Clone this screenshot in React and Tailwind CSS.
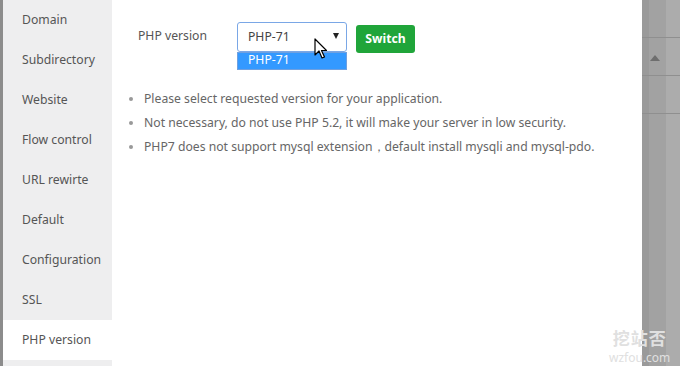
import React from "react";

const items = ["Domain","Subdirectory","Website","Flow control","URL rewirte","Default","Configuration","SSL","PHP version"];

export default function App() {
  return (
    <div className="relative flex h-[366px] w-[680px] overflow-hidden bg-white" style={{fontFamily: '"Noto Sans", "Open Sans", sans-serif'}}>
      <div className="w-[3px] shrink-0 bg-[#8c8c8c]" />
      <div className="flex w-[109px] shrink-0 flex-col bg-[#eeeeef]">
        {items.map((t, i) => (
          <div key={t} className={`flex h-10 shrink-0 items-center pl-[19px] text-[12.2px] text-[#555] ${i === 8 ? "bg-white" : ""}`}>{t}</div>
        ))}
      </div>
      <div className="relative w-[530px] shrink-0 bg-white">
        <div className="flex items-center pl-[26px] pt-[20px]">
          <div className="w-[99px] text-[12.2px] text-[#555]">PHP version</div>
          <div className="relative">
            <div className="flex h-[30px] w-[110px] items-center justify-between rounded-[3px] border border-[#7aa7e6] bg-white pl-[10px] pr-[7px] text-[12.2px] text-[#444]">
              <span className="mt-[1px]">PHP-71</span>
              <span className="mb-[2px] h-0 w-0 border-x-[3.5px] border-t-[6px] border-x-transparent border-t-[#222]" />
            </div>
            <div className="absolute left-0 top-[30px] flex h-[18px] w-[110px] items-center border border-[#6fa0e0] bg-[#3399ff] pl-[10px] text-[12.2px] text-white">PHP-71</div>
            <svg className="absolute left-[77px] top-[16px]" width="14" height="22" viewBox="0 0 14 22">
              <path d="M1 1 L1 17 L5 13 L8 20 L10.5 19 L7.5 12.5 L12.5 12.5 Z" fill="white" stroke="black" strokeWidth="1.2" strokeLinejoin="round" />
            </svg>
          </div>
          <button className="ml-[9px] mt-[5px] h-[28px] w-[59px] rounded-[3px] bg-[#20a53a] text-[12.2px] font-bold text-white">Switch</button>
        </div>
        <ul className="mt-[34px] flex flex-col pl-[17px] text-[12.2px] text-[#666]">
          {["Please select requested version for your application.","Not necessary, do not use PHP 5.2, it will make your server in low security.","PHP7 does not support mysql extension，default install mysqli and mysql-pdo."].map((t) => (
            <li key={t} className="flex h-6 items-center">
              <span className="mr-[11px] inline-block h-[4px] w-[4px] rounded-full bg-[#999]" />
              {t}
            </li>
          ))}
        </ul>
      </div>
      <div className="relative flex flex-1">
        <div className="w-[7px] bg-[#9a9a9a]" />
        <div className="w-[17px] bg-[#a2a2a2]" />
        <div className="flex-1 bg-[#acacac]" />
        <div className="absolute left-0 right-0 top-[37px] h-px bg-[#8f8f8f]" />
        <div className="absolute left-0 right-0 top-[75px] h-px bg-[#8f8f8f]" />
        <div className="absolute left-0 right-0 top-[113px] h-px bg-[#8f8f8f]" />
        <div className="absolute left-[8px] top-[55px] h-0 w-0 border-x-[5px] border-b-[6px] border-x-transparent border-b-[#6e6e6e]" />
      </div>
      <div className="pointer-events-none absolute left-[609px] top-[328px] flex flex-col items-center gap-[3px] text-[#e0e0e0]">
        <div className="text-[17px] font-bold leading-[20px] tracking-[1px]" style={{fontFamily: '"Noto Sans CJK SC", sans-serif'}}>挖站否</div>
        <div className="text-[12px] leading-[13px]">wzfou.com</div>
      </div>
    </div>
  );
}
